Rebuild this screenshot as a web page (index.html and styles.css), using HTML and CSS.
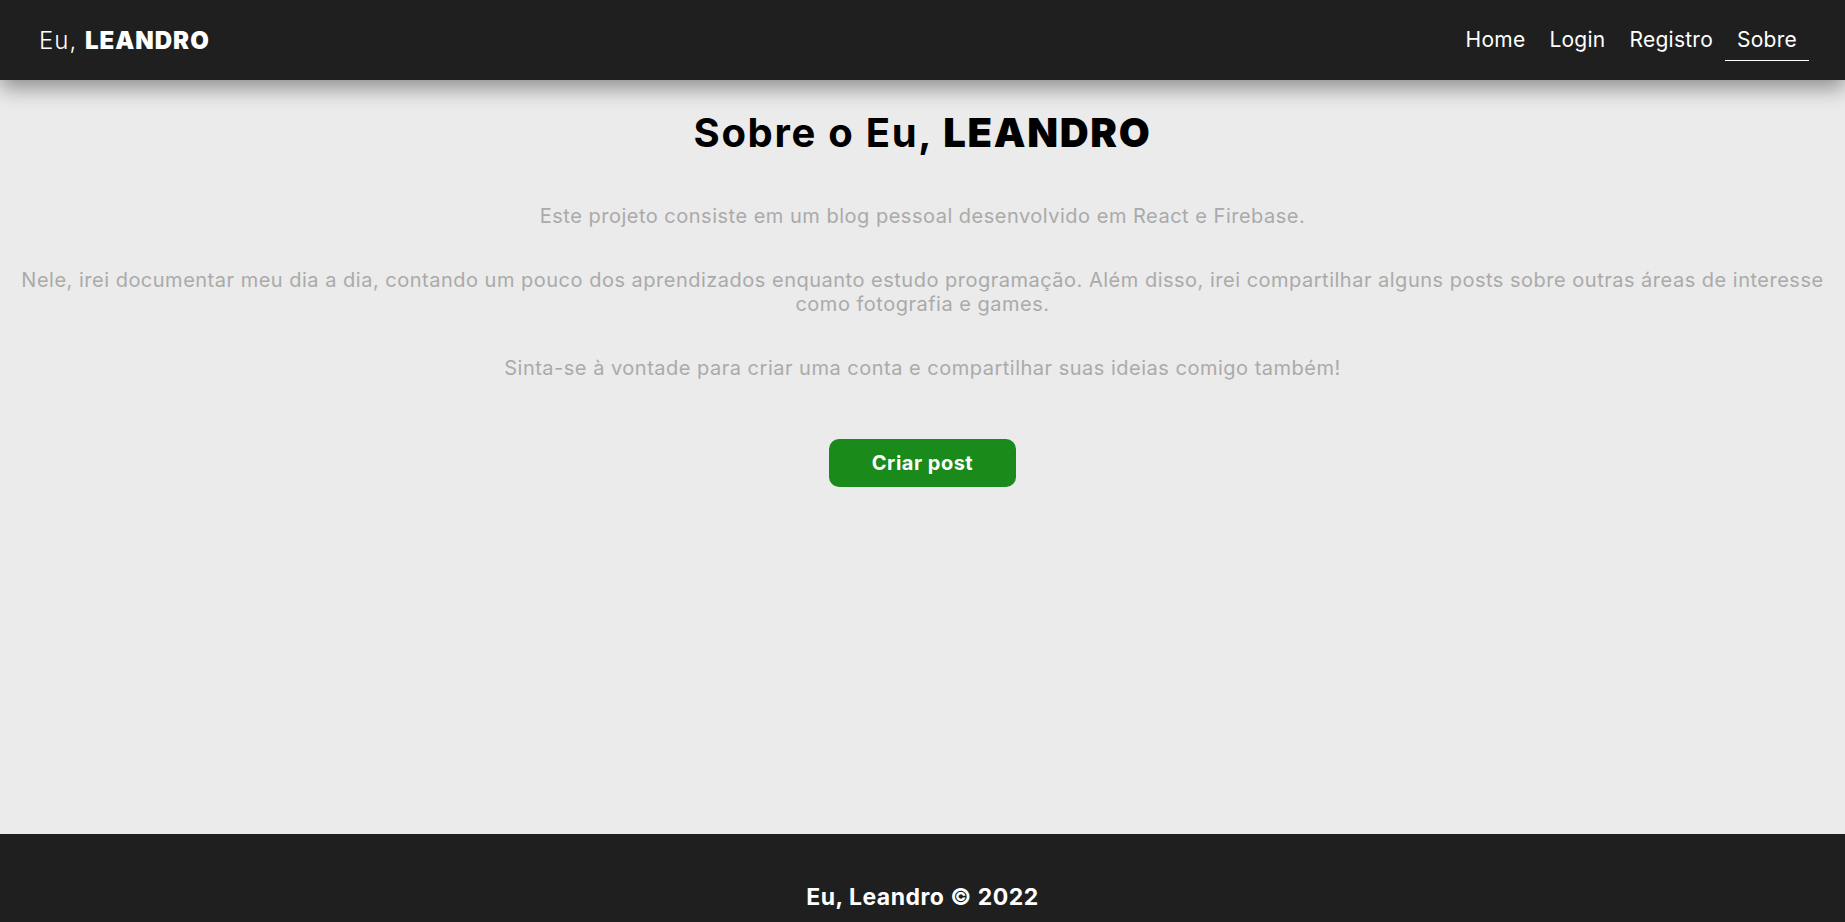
FILE: index.html
```html
<!DOCTYPE html>
<html lang="pt-BR">
<head>
<meta charset="utf-8">
<title>Eu, Leandro</title>
<link rel="stylesheet" href="styles.css">
</head>
<body>
<nav class="navbar">
  <a class="brand" href="#">Eu, <span>LEANDRO</span></a>
  <ul class="links">
    <li><a href="#">Home</a></li>
    <li><a href="#">Login</a></li>
    <li><a href="#">Registro</a></li>
    <li><a class="active" href="#">Sobre</a></li>
  </ul>
</nav>
<main class="about">
  <h2 class="title">Sobre o Eu, <span>LEANDRO</span></h2>
  <p>Este projeto consiste em um blog pessoal desenvolvido em React e Firebase.</p>
  <p>Nele, irei documentar meu dia a dia, contando um pouco dos aprendizados enquanto estudo programação. Além disso, irei compartilhar alguns posts sobre outras áreas de interesse como fotografia e games.</p>
  <p>Sinta-se à vontade para criar uma conta e compartilhar suas ideias comigo também!</p>
  <a class="btn" href="#">Criar post</a>
</main>
<footer class="footer">
  <h3>Eu, Leandro &copy; 2022</h3>
</footer>
</body>
</html>
```
FILE: styles.css
```css
* { box-sizing: border-box; }
body {
  margin: 0;
  background: #ebebeb;
  font-family: "Inter", "Open Sans", sans-serif;
}
a { text-decoration: none; color: inherit; }

.navbar {
  position: relative;
  z-index: 2;
  height: 80px;
  display: flex;
  align-items: center;
  justify-content: space-between;
  padding: 0 36px 0 39px;
  background: #1f1f1f;
  box-shadow: 0 8px 20px rgba(0, 0, 0, 0.4);
  color: #fff;
}
.brand {
  font-size: 24px;
  font-weight: 300;
  letter-spacing: 1px;
  color: #fff;
}
.brand span { font-weight: 900; }
.links {
  list-style: none;
  display: flex;
  margin: 0;
  padding: 0;
}
.links a {
  display: block;
  padding: 8px 12px;
  font-size: 21px;
  line-height: 24px;
  letter-spacing: 0.25px;
  color: #fff;
  border-bottom: 1px solid transparent;
}
.links a.active { border-bottom-color: #fff; }

.about {
  min-height: 754px;
  display: flex;
  flex-direction: column;
  align-items: center;
  text-align: center;
  padding: 29px 8px 0;
}
.title {
  margin: 0 0 47px;
  font-size: 40px;
  line-height: 48px;
  font-weight: 700;
  letter-spacing: 1.7px;
  color: #000;
}
.title span { font-weight: 900; }
.about p {
  margin: 0 0 40px;
  font-size: 20px;
  line-height: 24px;
  letter-spacing: 0.5px;
  color: #aaa;
}
.about p:last-of-type { margin-bottom: 59px; }
.btn {
  width: 187px;
  height: 48px;
  display: flex;
  align-items: center;
  justify-content: center;
  background: #1a8a1a;
  color: #fff;
  border-radius: 10px;
  font-size: 20px;
  font-weight: 700;
  letter-spacing: 0.5px;
}

.footer {
  height: 200px;
  background: #1f1f1f;
  color: #fff;
  text-align: center;
  padding-top: 49px;
}
.footer h3 {
  margin: 0;
  font-size: 23px;
  line-height: 28px;
  font-weight: 700;
  letter-spacing: 0.5px;
}
```
